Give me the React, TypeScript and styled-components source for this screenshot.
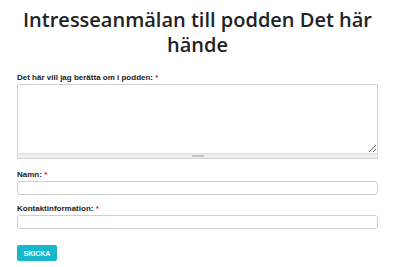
import React from "react";
import styled, { createGlobalStyle } from "styled-components";

const Global = createGlobalStyle`
  html, body { margin: 0; padding: 0; background: #fff; }
  * { box-sizing: border-box; }
`;

const Page = styled.div`
  width: 400px;
  padding: 7px 22px 0 17px;
  font-family: "Liberation Sans", Arial, sans-serif;
  color: #222;
`;

const Title = styled.h1`
  margin: 0 0 16px;
  font-family: "Open Sans", "Noto Sans", sans-serif;
  font-weight: 600;
  font-size: 20px;
  line-height: 25px;
  text-align: center;
  color: #222;
`;

const Field = styled.div<{ $gap?: number }>`
  display: flex;
  flex-direction: column;
  margin-bottom: ${(p) => p.$gap ?? 9}px;
`;

const Label = styled.label`
  font-size: 8px;
  font-weight: 700;
  line-height: 10px;
  color: #222;
  margin-bottom: 1px;
`;

const Req = styled.span`
  color: #d8242c;
`;

const TextAreaWrap = styled.div`
  display: flex;
  flex-direction: column;
`;

const TextArea = styled.textarea`
  display: block;
  width: 100%;
  height: 69px;
  border: 1px solid #cfcfcf;
  border-bottom: none;
  border-radius: 2px 2px 0 0;
  resize: vertical;
  font: inherit;
  margin: 0;
  outline: none;
`;

const Grippie = styled.div`
  height: 6px;
  background: #eee;
  border: 1px solid #d6d6d6;
  border-top-color: #ddd;
  display: flex;
  justify-content: center;
  align-items: center;
`;

const Grip = styled.div`
  width: 12px;
  height: 2px;
  border-top: 1px solid #c4c4c4;
  border-bottom: 1px solid #c4c4c4;
`;

const Input = styled.input`
  display: block;
  width: 100%;
  height: 14px;
  border: 1px solid #cfcfcf;
  border-radius: 3px;
  margin: 0;
  padding: 0 4px;
  font: inherit;
  outline: none;
`;

const Button = styled.button`
  width: 40px;
  height: 16px;
  margin-top: 7px;
  padding: 0;
  border: none;
  border-radius: 2px;
  background: #18b8cc;
  color: #fff;
  font-family: "Liberation Sans", Arial, sans-serif;
  font-weight: 700;
  font-size: 7px;
  cursor: pointer;
`;

export default function App() {
  return (
    <>
      <Global />
      <Page>
        <Title>Intresseanmälan till podden Det här hände</Title>
        <Field $gap={11}>
          <Label>
            Det här vill jag berätta om i podden: <Req>*</Req>
          </Label>
          <TextAreaWrap>
            <TextArea />
            <Grippie>
              <Grip />
            </Grippie>
          </TextAreaWrap>
        </Field>
        <Field $gap={9}>
          <Label>
            Namn: <Req>*</Req>
          </Label>
          <Input />
        </Field>
        <Field $gap={9}>
          <Label>
            Kontaktinformation: <Req>*</Req>
          </Label>
          <Input />
        </Field>
        <Button>SKICKA</Button>
      </Page>
    </>
  );
}
